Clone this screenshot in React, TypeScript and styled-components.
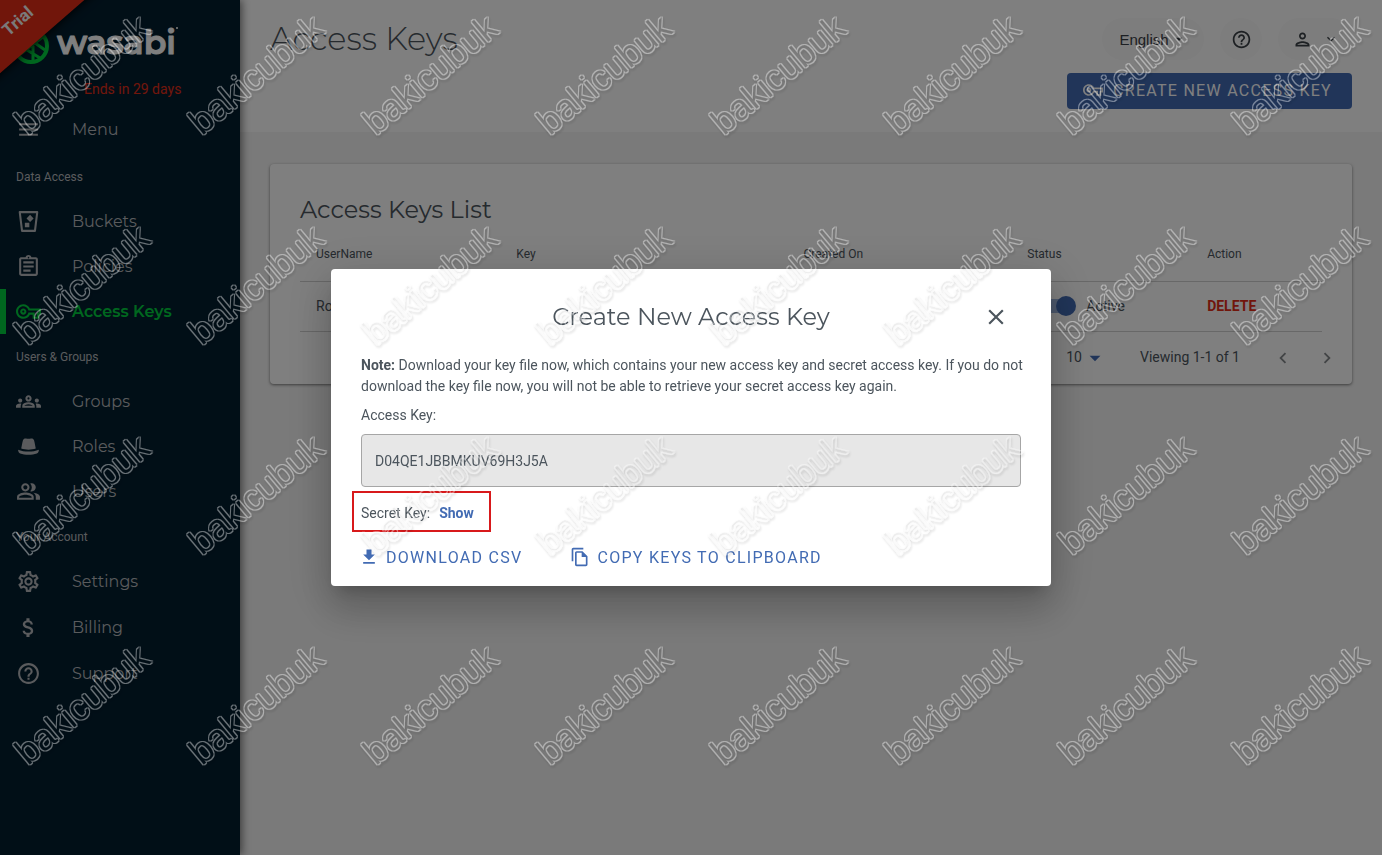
import React from "react";
import styled, { createGlobalStyle } from "styled-components";
import {
  MdArrowDropDown,
  MdAttachMoney,
  MdChevronLeft,
  MdChevronRight,
  MdClose,
  MdExpandMore,
  MdFileDownload,
  MdHelpOutline,
  MdMenu,
  MdOutlineAssignment,
  MdOutlineFileCopy,
  MdOutlineGroups,
  MdOutlinePeopleAlt,
  MdOutlinePerson,
  MdOutlineSettings,
  MdOutlineVpnKey,
} from "react-icons/md";

const heading = `Montserrat, Inter, sans-serif`;
const blue = "#426bb3";
const ink = "#4c555d";

const GlobalStyle = createGlobalStyle`
  *, *::before, *::after { box-sizing: border-box; }
  body { margin: 0; background: #f4f4f4; color: ${ink}; font: 14px/21px Roboto, sans-serif; }
  h1, h2, p, ul { margin: 0; padding: 0; font-weight: 400; }
  button { border: 0; background: none; padding: 0; font: inherit; color: inherit; cursor: pointer; }
  a { color: inherit; text-decoration: none; }
`;

const Page = styled.div`
  display: flex;
  min-height: 100vh;
`;

const Sidebar = styled.nav`
  position: relative;
  z-index: 1;
  flex: 0 0 240px;
  background: #031e2f;
  color: #b4b7ba;
  box-shadow: 2px 0 8px rgba(0, 0, 0, 0.5);
  clip-path: inset(0 -12px 0 0);
`;

const Ribbon = styled.div`
  position: absolute;
  left: -64px;
  top: -18px;
  width: 200px;
  height: 60px;
  line-height: 64px;
  text-align: center;
  font-size: 17px;
  font-weight: 700;
  color: #f4f4f4;
  background: #e32d17;
  box-shadow: 0 2px 8px rgba(0, 0, 0, 0.8);
  transform: rotate(-41deg);
  transform-origin: bottom center;
`;

const Brand = styled.div`
  height: 107px;
  padding-top: 16px;
`;

const Logo = styled.svg`
  display: block;
  width: 240px;
  height: 56px;
`;

const TrialNote = styled.p`
  padding-left: 84px;
  line-height: 34px;
  color: #e32d17;
`;

const MenuToggle = styled.div`
  margin-bottom: 2px;
`;

const NavList = styled.ul`
  list-style: none;
`;

const NavLink = styled.a<{ $active?: boolean; $tall?: boolean }>`
  display: flex;
  align-items: center;
  gap: 31px;
  height: ${(p) => (p.$tall ? 46 : 45)}px;
  padding-left: ${(p) => (p.$active ? 10 : 16)}px;
  border-left: ${(p) => (p.$active ? "6px solid #00ce3e" : "0")};
  color: ${(p) => (p.$active ? "#00ce3e" : "inherit")};
  font: ${(p) => (p.$active ? 600 : 400)} 16px ${heading};

  svg {
    flex: none;
    width: 25px;
    height: 25px;
  }
`;

const NavHeading = styled.h2`
  padding: 2px 0 0 16px;
  font-size: 12px;
  line-height: 43px;
`;

const Main = styled.main`
  flex: 1;
  min-width: 0;
`;

const Header = styled.header`
  height: 132px;
  padding: 18px 30px 0;
  background: #fff;
`;

const HeaderRow = styled.div`
  display: flex;
  justify-content: space-between;
  align-items: flex-start;
`;

const PageTitle = styled.h1`
  font: 300 32px/42px ${heading};
`;

const HeaderTools = styled.div`
  display: flex;
  gap: 16px;
`;

const Pill = styled.button<{ $w: number }>`
  display: flex;
  align-items: center;
  justify-content: center;
  gap: 2px;
  width: ${(p) => p.$w}px;
  height: 42px;
  border-radius: 21px;
  background: #fafafa;
  color: #3a4046;
  font: 15px "Liberation Sans", sans-serif;
`;

const UserPill = styled(Pill)`
  gap: 10px;
`;

const CreateButton = styled.button`
  display: flex;
  align-items: center;
  gap: 10px;
  height: 36px;
  margin: 13px 0 0 auto;
  padding: 0 20px 2px 16px;
  border-radius: 4px;
  background: ${blue};
  color: #fff;
  font-size: 16px;
  letter-spacing: 0.08em;
`;

const Card = styled.section`
  margin: 32px 30px;
  padding: 30px 30px 0;
  border-radius: 4px;
  background: #fff;
  box-shadow: 0 1px 3px rgba(0, 0, 0, 0.5);
`;

const CardTitle = styled.h2`
  font: 400 24px/32px ${heading};
`;

const Table = styled.table`
  width: 100%;
  table-layout: fixed;
  border-collapse: collapse;
`;

const Th = styled.th<{ $w?: string }>`
  width: ${(p) => p.$w || "auto"};
  height: 55px;
  padding: 2px 16px 0;
  border-bottom: 1px solid #d0d0d0;
  text-align: left;
  font-size: 12px;
  font-weight: 400;
`;

const Td = styled.td`
  height: 50px;
  padding: 0 16px;
  border-bottom: 1px solid #d0d0d0;
`;

const SwitchLabel = styled.label`
  display: flex;
  align-items: center;
  gap: 10px;
  padding-left: 12px;
`;

const Switch = styled.input`
  appearance: none;
  display: flex;
  align-items: center;
  justify-content: flex-end;
  width: 37px;
  height: 20px;
  margin: 0;
  background: linear-gradient(#9db4dc, #9db4dc) 0 3px / 34px 14px no-repeat;
  border-radius: 10px;

  &::after {
    content: "";
    width: 20px;
    height: 20px;
    border-radius: 50%;
    background: ${blue};
  }
`;

const DeleteButton = styled.button`
  color: #e32d17;
  font-weight: 700;
`;

const Pagination = styled.div`
  display: flex;
  align-items: center;
  justify-content: flex-end;
  height: 52px;

  svg {
    display: block;
  }
`;

const PageSize = styled.button`
  display: flex;
  align-items: center;
  margin-right: 32px;

  svg {
    color: ${blue};
  }
`;

const PageRange = styled.span`
  margin-right: 32px;
`;

const PageButton = styled.button`
  color: #85898c;

  & + & {
    margin-left: 22px;
    margin-right: -16px;
  }
`;

const Backdrop = styled.div`
  position: fixed;
  inset: 0;
  z-index: 10;
  display: flex;
  align-items: center;
  justify-content: center;
  background: rgba(0, 0, 0, 0.5);
`;

const Dialog = styled.div`
  width: 720px;
  padding: 30px 30px 14px;
  border-radius: 4px;
  background: #fff;
  box-shadow: 0 11px 15px -7px rgba(0, 0, 0, 0.2), 0 24px 38px 3px rgba(0, 0, 0, 0.14),
    0 9px 46px 8px rgba(0, 0, 0, 0.12);
`;

const DialogHead = styled.div`
  display: grid;
  grid-template-columns: 50px 1fr 50px;
  align-items: center;
  height: 34px;
  margin-bottom: 22px;
`;

const DialogTitle = styled.h2`
  grid-column: 2;
  text-align: center;
  font: 400 24px/36px ${heading};
`;

const CloseButton = styled.button`
  display: flex;
  justify-content: center;
`;

const Note = styled.p`
  margin-right: -10px;
`;

const KeyLabel = styled.label`
  display: block;
  padding: 8px 0;
`;

const KeyInput = styled.input`
  display: block;
  width: 100%;
  height: 53px;
  padding: 0 13px;
  border: 1px solid #a6a6a6;
  border-radius: 4px;
  background: #e7e7e7;
  color: ${ink};
  font: 14px Roboto, sans-serif;
`;

const SecretRow = styled.div`
  display: flex;
  align-items: center;
  gap: 9px;
  width: fit-content;
  height: 41px;
  margin: 4px 0 10px -9px;
  padding: 3px 15px 0 7px;
  border: 2px solid #d8191b;
`;

const ShowButton = styled.button`
  color: ${blue};
  font-weight: 700;
`;

const Actions = styled.div`
  display: flex;
  gap: 48px;
  margin-left: -2px;
`;

const TextButton = styled.button`
  display: flex;
  align-items: center;
  gap: 7px;
  height: 30px;
  color: ${blue};
  font-size: 16px;
  letter-spacing: 0.08em;
`;

const WatermarkLayer = styled.svg`
  position: fixed;
  inset: 0;
  z-index: 20;
  width: 100%;
  height: 100%;
  pointer-events: none;
`;

const BucketIcon = () => (
  <svg viewBox="0 0 24 24" fill="none" stroke="currentColor" strokeWidth="2">
    <path d="M3.6 3h16.8l-2.2 18H5.8z" strokeLinejoin="round" />
    <path d="M13.5 5.600l3.400 3.400-3.400 3.400-3.400-3.400z M8.500 13.200h4.300v4.300h-4.300z" fill="currentColor" stroke="none" />
  </svg>
);

const HatIcon = () => (
  <svg viewBox="0 0 24 24" fill="currentColor">
    <path d="M5 14c.7-3 .9-5.500 1.700-8C7.200 4.500 8.500 4 9.600 4.300c1.600.4 3.200.4 4.800 0 1.100-.3 2.400.2 2.900 1.700.8 2.500 1 5 1.700 8-4 1.400-10 1.400-14 0z" />
    <path d="M2 15c6 2.400 14 2.400 20 0-.2 2-.8 3.200-2 3.800-4.500 1.600-11.500 1.600-16 0-1.200-.6-1.800-1.800-2-3.800z" />
  </svg>
);

type NavItem = { label: string; icon: React.ReactNode; active?: boolean; tall?: boolean };

const groups: { title: string; items: NavItem[] }[] = [
  {
    title: "Data Access",
    items: [
      { label: "Buckets", icon: <BucketIcon /> },
      { label: "Policies", icon: <MdOutlineAssignment /> },
      { label: "Access Keys", icon: <MdOutlineVpnKey />, active: true },
    ],
  },
  {
    title: "Users & Groups",
    items: [
      { label: "Groups", icon: <MdOutlineGroups /> },
      { label: "Roles", icon: <HatIcon /> },
      { label: "Users", icon: <MdOutlinePeopleAlt /> },
    ],
  },
  {
    title: "Your Account",
    items: [
      { label: "Settings", icon: <MdOutlineSettings /> },
      { label: "Billing", icon: <MdAttachMoney />, tall: true },
      { label: "Support", icon: <MdHelpOutline />, tall: true },
    ],
  },
];

const WasabiLogo = () => (
  <Logo role="img" aria-label="wasabi">
    <g fill="none" stroke="#00ce3e" strokeWidth="4">
      <circle cx="31" cy="30" r="16" />
      <path d="M18 40L44 20M27 34l13 8M35 27l10 7M33 30v16" strokeWidth="3" />
    </g>
    <text
      x="57"
      y="38"
      fill="#fff"
      stroke="#fff"
      strokeWidth="1"
      strokeLinejoin="round"
      fontFamily="Montserrat, Lato, sans-serif"
      fontWeight="600"
      fontSize="33"
    >
      wasabi
    </text>
    <circle cx="177" cy="12" r="1" fill="#fff" />
  </Logo>
);

const Watermark = () => (
  <WatermarkLayer aria-hidden="true">
    <defs>
      <filter id="soft" x="-20%" y="-20%" width="140%" height="140%">
        <feMorphology in="SourceAlpha" operator="dilate" radius="1" result="wide" />
        <feComposite in="wide" in2="SourceAlpha" operator="out" result="rim" />
        <feFlood floodColor="#fff" floodOpacity="0.4" />
        <feComposite in2="rim" operator="in" result="line" />
        <feDropShadow in="line" dx="1" dy="2" stdDeviation="1" floodColor="#000" floodOpacity="0.4" />
      </filter>
      <pattern id="marks" width="174" height="210" patternUnits="userSpaceOnUse">
        <g filter="url(#soft)">
          <text
            transform="translate(28 136) rotate(-40)"
            fontFamily="Liberation Sans, sans-serif"
            fontSize="36"
            fill="#fff"
          >
            bakicubuk
          </text>
        </g>
      </pattern>
    </defs>
    <rect width="100%" height="100%" fill="url(#marks)" />
  </WatermarkLayer>
);

export default function App() {
  return (
    <>
      <GlobalStyle />
      <Page>
        <Sidebar>
          <Brand>
            <WasabiLogo />
            <TrialNote>Ends in 29 days</TrialNote>
          </Brand>
          <Ribbon>Trial</Ribbon>
          <MenuToggle>
            <NavLink href="#menu">
              <MdMenu />
              Menu
            </NavLink>
          </MenuToggle>
          {groups.map((g) => (
            <React.Fragment key={g.title}>
              <NavHeading>{g.title}</NavHeading>
              <NavList>
                {g.items.map((it) => (
                  <li key={it.label}>
                    <NavLink href="#" $active={it.active} $tall={it.tall}>
                      {it.icon}
                      {it.label}
                    </NavLink>
                  </li>
                ))}
              </NavList>
            </React.Fragment>
          ))}
        </Sidebar>
        <Main>
          <Header>
            <HeaderRow>
              <PageTitle>Access Keys</PageTitle>
              <HeaderTools>
                <Pill $w={102}>
                  English
                  <MdArrowDropDown size={16} />
                </Pill>
                <Pill $w={42} aria-label="Help">
                  <MdHelpOutline size={21} />
                </Pill>
                <UserPill $w={74} aria-label="Account">
                  <MdOutlinePerson size={21} />
                  <MdExpandMore size={16} />
                </UserPill>
              </HeaderTools>
            </HeaderRow>
            <CreateButton>
              <MdOutlineVpnKey size={20} />
              CREATE NEW ACCESS KEY
            </CreateButton>
          </Header>
          <Card>
            <CardTitle>Access Keys List</CardTitle>
            <Table>
              <thead>
                <tr>
                  <Th $w="19.6%">UserName</Th>
                  <Th $w="28.1%">Key</Th>
                  <Th $w="21.9%">Created On</Th>
                  <Th $w="17.6%">Status</Th>
                  <Th>Action</Th>
                </tr>
              </thead>
              <tbody>
                <tr>
                  <Td>Root</Td>
                  <Td />
                  <Td />
                  <Td>
                    <SwitchLabel>
                      <Switch type="checkbox" role="switch" defaultChecked />
                      Active
                    </SwitchLabel>
                  </Td>
                  <Td>
                    <DeleteButton>DELETE</DeleteButton>
                  </Td>
                </tr>
              </tbody>
            </Table>
            <Pagination>
              <PageSize aria-label="Rows per page">
                10
                <MdArrowDropDown size={26} />
              </PageSize>
              <PageRange>Viewing 1-1 of 1</PageRange>
              <PageButton aria-label="Previous page">
                <MdChevronLeft size={22} />
              </PageButton>
              <PageButton aria-label="Next page">
                <MdChevronRight size={22} />
              </PageButton>
            </Pagination>
          </Card>
        </Main>
      </Page>
      <Backdrop>
        <Dialog role="dialog" aria-modal="true" aria-labelledby="dialog-title">
          <DialogHead>
            <DialogTitle id="dialog-title">Create New Access Key</DialogTitle>
            <CloseButton aria-label="Close">
              <MdClose size={26} />
            </CloseButton>
          </DialogHead>
          <Note>
            <b>Note:</b> Download your key file now, which contains your new access key and secret access key. If you
            do not download the key file now, you will not be able to retrieve your secret access key again.
          </Note>
          <KeyLabel htmlFor="access-key">Access Key:</KeyLabel>
          <KeyInput id="access-key" readOnly value="D04QE1JBBMKUV69H3J5A" />
          <SecretRow>
            <span>Secret Key:</span>
            <ShowButton>Show</ShowButton>
          </SecretRow>
          <Actions>
            <TextButton>
              <MdFileDownload size={20} />
              DOWNLOAD CSV
            </TextButton>
            <TextButton>
              <MdOutlineFileCopy size={20} />
              COPY KEYS TO CLIPBOARD
            </TextButton>
          </Actions>
        </Dialog>
      </Backdrop>
      <Watermark />
    </>
  );
}
